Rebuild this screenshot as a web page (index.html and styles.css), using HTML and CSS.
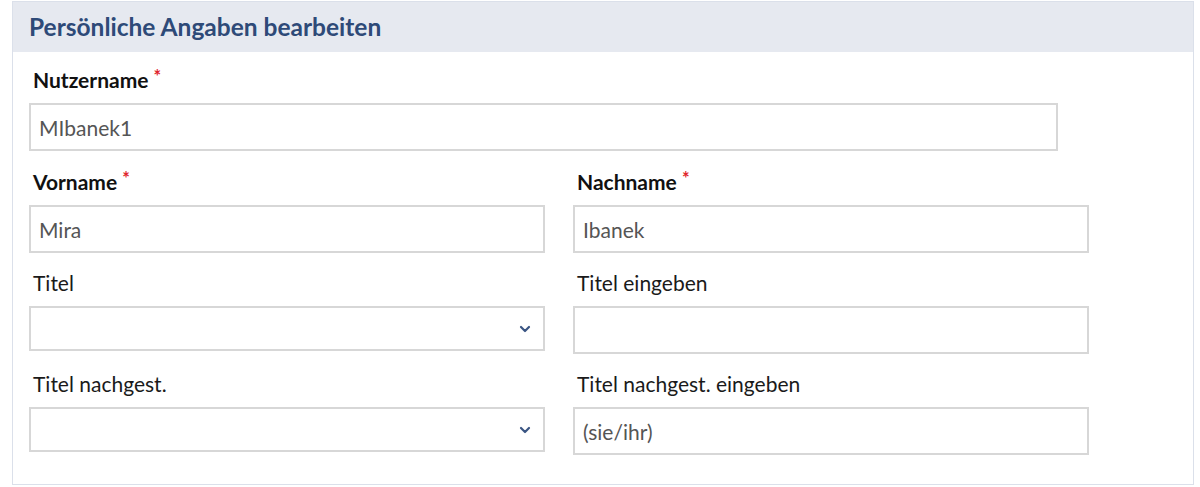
FILE: index.html
```html
<!DOCTYPE html>
<html lang="de">
<head>
<meta charset="utf-8">
<title>Persönliche Angaben bearbeiten</title>
<link rel="stylesheet" href="styles.css">
</head>
<body>
<section class="card">
  <header class="card-header">
    <h2 class="card-title">Persönliche Angaben bearbeiten</h2>
  </header>
  <div class="card-body">
    <div class="field field-wide">
      <label class="label">Nutzername <span class="req">*</span></label>
      <div class="input">MIbanek1</div>
    </div>
    <div class="grid">
      <div class="field">
        <label class="label">Vorname <span class="req">*</span></label>
        <div class="input">Mira</div>
      </div>
      <div class="field">
        <label class="label">Nachname <span class="req">*</span></label>
        <div class="input">Ibanek</div>
      </div>
      <div class="field">
        <label class="label label-plain">Titel</label>
        <div class="select">
          <svg class="chev" width="12" height="8" viewBox="0 0 12 8"><path d="M2 2 L6 6 L10 2" fill="none" stroke="#3a5583" stroke-width="2.2" stroke-linecap="round" stroke-linejoin="round"/></svg>
        </div>
      </div>
      <div class="field">
        <label class="label label-plain">Titel eingeben</label>
        <div class="input"></div>
      </div>
      <div class="field">
        <label class="label label-plain">Titel nachgest.</label>
        <div class="select">
          <svg class="chev" width="12" height="8" viewBox="0 0 12 8"><path d="M2 2 L6 6 L10 2" fill="none" stroke="#3a5583" stroke-width="2.2" stroke-linecap="round" stroke-linejoin="round"/></svg>
        </div>
      </div>
      <div class="field">
        <label class="label label-plain">Titel nachgest. eingeben</label>
        <div class="input">(sie/ihr)</div>
      </div>
    </div>
  </div>
</section>
</body>
</html>
```

FILE: styles.css
```css
* { box-sizing: border-box; }
html, body { margin: 0; padding: 0; background: #fff; }
body {
  font-family: Lato, "Open Sans", Arial, sans-serif;
  color: #111;
  padding: 1px 6px 0 12px;
}
.card {
  border: 1px solid #dbe0ea;
  height: 484px;
  background: #fff;
}
.card-header {
  background: #e6e9f0;
  height: 50px;
  display: flex;
  align-items: center;
  padding: 0 16px;
}
.card-title {
  margin: 0;
  font-size: 24.5px;
  font-weight: 700;
  color: #2e4a78;
  line-height: 30px;
}
.card-body {
  padding: 16px 16px 0 16px;
}
.field { margin-bottom: 19px; }
.label {
  display: block;
  font-size: 21px;
  font-weight: 700;
  line-height: 24px;
  height: 24px;
  margin: 0 0 11px 4px;
  color: #111;
  white-space: nowrap;
}
.label-plain { font-weight: 400; color: #1a1a1a; }
.req { color: #e0242c; font-size: 18px; vertical-align: top; line-height: 16px; }
.grid {
  display: grid;
  grid-template-columns: 516px 516px;
  column-gap: 28px;
}
.grid .field { margin-bottom: 18px; }
.field-wide .input { width: 1029px; }
.input {
  height: 48px;
  border: 2px solid #d7d7d7;
  padding: 0 8px;
  display: flex;
  align-items: center;
  font-size: 21px;
  color: #555;
}
.select {
  height: 45px;
  border: 2px solid #d7d7d7;
  display: flex;
  align-items: center;
  justify-content: flex-end;
  padding-right: 12px;
  margin-bottom: 3px;
}
.chev { display: block; }
```
